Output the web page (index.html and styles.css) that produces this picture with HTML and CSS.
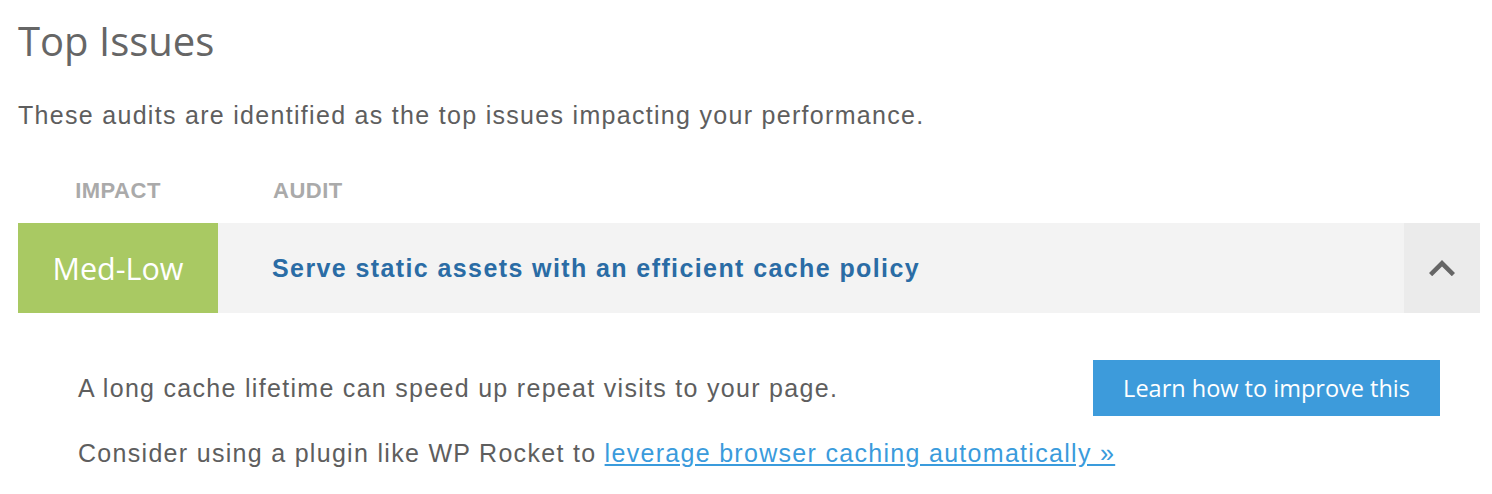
FILE: index.html
```html
<!DOCTYPE html>
<html lang="en">
<head>
<meta charset="utf-8">
<title>Top Issues</title>
<link rel="stylesheet" href="styles.css">
</head>
<body>
<section class="issues">
  <h1 class="issues-title">Top Issues</h1>
  <p class="issues-intro">These audits are identified as the top issues impacting your performance.</p>
  <div class="issues-head">
    <div class="col-impact">Impact</div>
    <div class="col-audit">Audit</div>
  </div>
  <div class="issue-row">
    <div class="impact impact-medlow">Med-Low</div>
    <div class="audit-name">Serve static assets with an efficient cache policy</div>
    <div class="toggle">
      <svg width="26" height="16" viewBox="0 0 26 16" aria-hidden="true"><polygon points="13,0 26,13 22.8,16.2 13,6.4 3.2,16.2 0,13" fill="#666"/></svg>
    </div>
  </div>
  <div class="issue-details">
    <div class="details-row">
      <p class="details-text">A long cache lifetime can speed up repeat visits to your page.</p>
      <a class="btn-learn" href="#">Learn how to improve this</a>
    </div>
    <p class="details-text details-tip">Consider using a plugin like WP Rocket to <a class="link" href="#">leverage browser caching automatically »</a></p>
  </div>
</section>
</body>
</html>
```
FILE: styles.css
```css
html, body {
  margin: 0;
  padding: 0;
  background: #fff;
}
.issues {
  width: 1462px;
  padding-left: 18px;
  font-family: "Liberation Sans", Arial, sans-serif;
  color: #5e5e5e;
}
.issues-title {
  margin: 19px 0 0;
  font-family: "Open Sans", sans-serif;
  font-weight: 500;
  font-size: 40px;
  line-height: 44px;
  color: #666;
}
.issues-intro {
  margin: 38px 0 0;
  font-size: 25px;
  line-height: 28px;
  letter-spacing: 1.3px;
  color: #5e5e5e;
}
.issues-head {
  display: flex;
  margin-top: 50px;
  margin-bottom: 20px;
  font-weight: bold;
  font-size: 22px;
  line-height: 24px;
  text-transform: uppercase;
  letter-spacing: 0.5px;
  color: #aaa;
}
.col-impact {
  width: 200px;
  text-align: center;
}
.col-audit {
  padding-left: 55px;
}
.issue-row {
  display: flex;
  height: 90px;
  background: #f3f3f3;
}
.impact {
  width: 200px;
  display: flex;
  align-items: center;
  justify-content: center;
  font-family: "Open Sans", sans-serif;
  font-size: 30.5px;
  color: #fff;
}
.impact-medlow {
  background: #a9c963;
}
.audit-name {
  flex: 1;
  display: flex;
  align-items: center;
  padding-left: 54px;
  font-weight: bold;
  font-size: 25px;
  letter-spacing: 1.4px;
  color: #2a6ca5;
}
.toggle {
  width: 76px;
  display: flex;
  align-items: center;
  justify-content: center;
  background: #ebebeb;
}
.issue-details {
  padding: 47px 40px 0 60px;
}
.details-row {
  display: flex;
  align-items: center;
  justify-content: space-between;
}
.details-text {
  margin: 0;
  font-size: 25px;
  line-height: 28px;
  letter-spacing: 1.3px;
  color: #5e5e5e;
}
.details-tip {
  margin-top: 23px;
}
.btn-learn {
  display: block;
  height: 56px;
  line-height: 56px;
  padding: 0 30px;
  background: #3d9bdb;
  color: #fff;
  text-decoration: none;
  font-family: "Open Sans", sans-serif;
  font-size: 23.5px;
  letter-spacing: 0;
}
.link {
  color: #3a9bdc;
  text-decoration: underline;
}
```
